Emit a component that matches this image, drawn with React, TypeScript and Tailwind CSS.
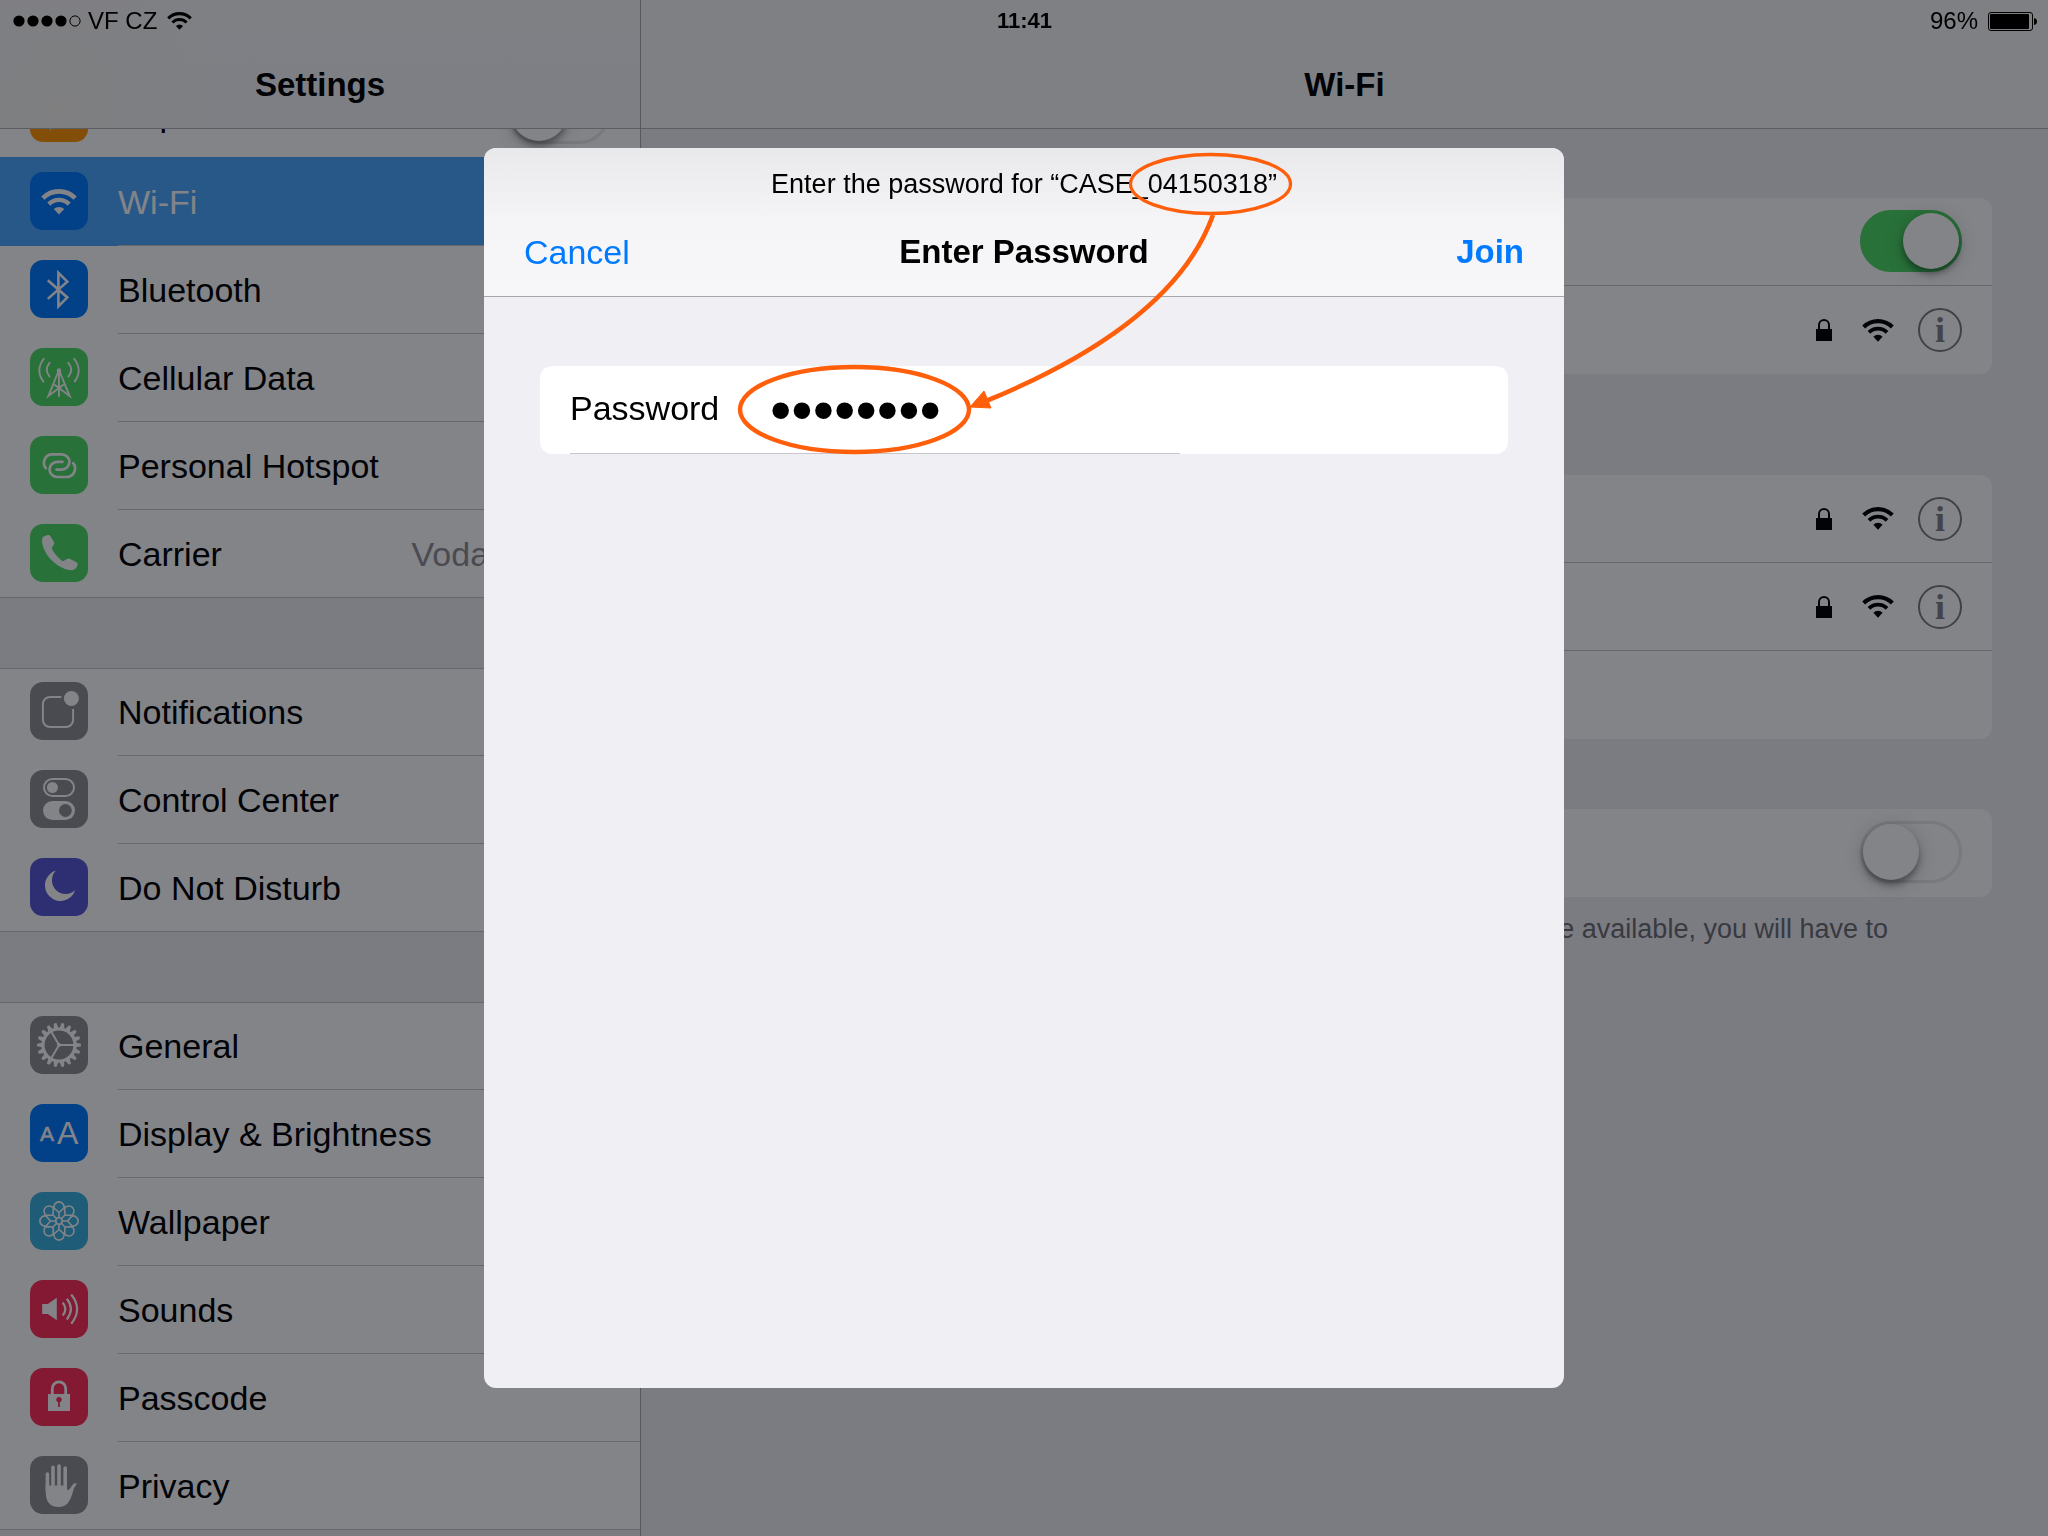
import type { ReactNode } from "react";
import clsx from "clsx";

const gearTeeth = Array.from({ length: 18 }, (_, i) => i * 20);
const petals = Array.from({ length: 8 }, (_, i) => i * 45);

function WifiGlyph({ className }: { className?: string }) {
  return (
    <svg viewBox="0 0 36 26" className={className} fill="none" aria-hidden="true">
      <path d="M1.8 9.1A22.9 22.9 0 0 1 34.2 9.1" stroke="currentColor" strokeWidth="4.6" />
      <path d="M7.8 15.1A14.4 14.4 0 0 1 28.2 15.1" stroke="currentColor" strokeWidth="4.4" />
      <path d="M18 25.6L12.8 20.1A7.3 7.3 0 0 1 23.2 20.1Z" fill="currentColor" />
    </svg>
  );
}

function LockGlyph({ className }: { className?: string }) {
  return (
    <svg viewBox="0 0 16 22" className={className} fill="none" aria-hidden="true">
      <path d="M3 11V6A5 5 0 0 1 13 6V11" stroke="currentColor" strokeWidth="2" />
      <rect y="10" width="16" height="12" fill="currentColor" />
    </svg>
  );
}

const icons = {
  airplane: (
    <path
      d="M45 28L12 13L18 27L10 31L17 33L20.500 47L24 38L30 44Z"
      fill="#fff"
    />
  ),
  wifi: (
    <g transform="translate(11 17)">
      <path d="M1.8 9.1A22.9 22.9 0 0 1 34.2 9.1" stroke="#fff" strokeWidth="4.6" />
      <path d="M7.8 15.1A14.4 14.4 0 0 1 28.2 15.1" stroke="#fff" strokeWidth="4.4" />
      <path d="M18 25.6L12.8 20.1A7.3 7.3 0 0 1 23.2 20.1Z" fill="#fff" />
    </g>
  ),
  bluetooth: (
    <path
      d="M17.8 20.3L37.3 37.4L28.4 46.4V12.8L37.3 21.7L17.8 38.9"
      stroke="#fff"
      strokeWidth="2.6"
      strokeMiterlimit="10"
    />
  ),
  cellular: (
    <g stroke="#fff" strokeWidth="1.9">
      <path d="M29 22V48.8M28.6 23L18.4 48L33.7 36.5M29.4 23L39.6 48L24.3 36.5" />
      <circle cx="29" cy="22.6" r="1.3" fill="#fff" />
      <g strokeLinecap="round">
        <path d="M19.6 14.8Q14 21.5 19.6 28.6" />
        <path d="M13.8 10.8Q5 22.5 13.4 33.6" />
        <path d="M38.4 14.8Q44 21.5 38.4 28.6" />
        <path d="M44.2 10.8Q53 22.5 44.6 33.6" />
      </g>
    </g>
  ),
  hotspot: (
    <g stroke="#fff" strokeWidth="2.7" strokeLinecap="round">
      <path d="M15.8 32.2A8.6 8.6 0 0 1 21 18.4H31.8A7.6 7.6 0 0 1 31.8 33.6H26.5" />
      <path
        d="M15.8 32.2A8.6 8.6 0 0 1 21 18.4H31.8A7.6 7.6 0 0 1 31.8 33.6H26.5"
        transform="rotate(180 29.5 29.7)"
      />
    </g>
  ),
  phone: (
    <path
      d="M13.5 12.5Q12 13.5 12 16C12 30 28 46 42 46.2Q45.5 46 47.5 41.5Q48.3 39.3 46.5 38.2L40.5 35.2Q38.3 34 36.5 35.3L33.5 37Q32.3 37.2 31.5 36.5C28 33.5 24.5 29.5 22.2 25.5Q21.5 24 22.3 23L24 20.3Q24.5 19.3 24 18.3L20.5 12.3Q19.3 10.5 17 11.2Z"
      fill="#fff"
    />
  ),
  notifications: (
    <>
      <path
        d="M31.3 14.9H20A7.1 7.1 0 0 0 12.9 22V38A7.1 7.1 0 0 0 20 45.1H36A7.1 7.1 0 0 0 43.1 38V27"
        stroke="#fff"
        strokeWidth="2"
      />
      <circle cx="41.4" cy="16.5" r="7.5" fill="#fff" />
    </>
  ),
  controlCenter: (
    <>
      <rect x="14" y="9" width="30" height="17" rx="8.5" stroke="#fff" strokeWidth="2" />
      <circle cx="22.4" cy="17.5" r="5.5" fill="#fff" />
      <rect x="13" y="31" width="32" height="19" rx="9.5" fill="#fff" />
      <circle cx="35.4" cy="40.5" r="6.4" fill="#8e8e93" />
    </>
  ),
  moon: <path d="M26 12.6A15.5 15.5 0 1 0 45.2 32A13.5 13.5 0 0 1 26 12.6Z" fill="#fff" />,
  gear: (
    <g transform="translate(29 29)">
      <circle r="16" stroke="#fff" strokeWidth="3.2" />
      {gearTeeth.map((angle) => (
        <path key={angle} d="M16 -2.6L22 -1.3V1.3L16 2.6Z" fill="#fff" transform={`rotate(${angle})`} />
      ))}
      {[0, 120, 240].map((angle) => (
        <path key={angle} d="M0 0H16" stroke="#fff" strokeWidth="2" transform={`rotate(${angle})`} />
      ))}
      <circle r="2" fill="#fff" />
    </g>
  ),
  display: (
    <g fill="#fff" fontFamily="Liberation Sans, Arial, sans-serif">
      <text x="10" y="37" fontSize="21" stroke="#fff" strokeWidth="0.5">
        A
      </text>
      <text x="27" y="40" fontSize="32">
        A
      </text>
    </g>
  ),
  wallpaper: (
    <g transform="translate(29 29)" stroke="#fff" strokeWidth="1.6">
      <circle r="3.2" />
      {petals.map((angle) => (
        <path
          key={angle}
          d="M0 -3.2V-8.5L-5 -13A5.1 5.1 0 1 1 5 -13L0 -8.5"
          transform={`rotate(${angle})`}
        />
      ))}
    </g>
  ),
  sounds: (
    <>
      <path d="M12.2 24H17.8L26.8 17.8V40.2L17.8 34H12.2Z" fill="#fff" />
      <path
        d="M32.7 22.5Q38 29 32.7 35.5M36.8 18.8Q45 29 36.8 39.5M41.2 14.5Q53 29 41.2 43.8"
        stroke="#fff"
        strokeWidth="2.2"
      />
    </>
  ),
  passcode: (
    <>
      <path d="M22.3 27V20.5A6.7 6.7 0 0 1 35.7 20.5V27" stroke="#fff" strokeWidth="2.8" />
      <rect x="18" y="26" width="22" height="17" fill="#fff" />
      <circle cx="29" cy="31.6" r="2.7" fill="#ff2d55" />
      <path d="M29 32V39" stroke="#ff2d55" strokeWidth="1.8" />
    </>
  ),
  hand: (
    <>
      <path
        d="M17.4 18V34M23 11.2V34M29 10V34M35.2 12V34"
        stroke="#fff"
        strokeWidth="3.6"
        strokeLinecap="round"
      />
      <path
        d="M15.7 29.5H36.9V34Q40 34 42 29.6Q44 26.6 47 27.6Q44 31 42.5 37C40 46 36 51 29 51C19 51 15.7 45 15.7 35Z"
        fill="#fff"
      />
    </>
  ),
};

type Item = {
  icon: ReactNode;
  color: string;
  name: string;
  value?: string;
  toggle?: boolean;
  selected?: boolean;
};

const groups: Item[][] = [
  [
    { icon: icons.airplane, color: "bg-[#ff9500]", name: "Airplane Mode", toggle: true },
    { icon: icons.wifi, color: "bg-[#007aff]", name: "Wi-Fi", selected: true },
    { icon: icons.bluetooth, color: "bg-[#007aff]", name: "Bluetooth" },
    { icon: icons.cellular, color: "bg-[#4cd964]", name: "Cellular Data" },
    { icon: icons.hotspot, color: "bg-[#4cd964]", name: "Personal Hotspot" },
    { icon: icons.phone, color: "bg-[#4cd964]", name: "Carrier", value: "Vodafone CZ" },
  ],
  [
    { icon: icons.notifications, color: "bg-[#8e8e93]", name: "Notifications" },
    { icon: icons.controlCenter, color: "bg-[#8e8e93]", name: "Control Center" },
    { icon: icons.moon, color: "bg-[#5856d6]", name: "Do Not Disturb" },
  ],
  [
    { icon: icons.gear, color: "bg-[#8e8e93]", name: "General" },
    { icon: icons.display, color: "bg-[#007aff]", name: "Display & Brightness" },
    { icon: icons.wallpaper, color: "bg-[#38b0de]", name: "Wallpaper" },
    { icon: icons.sounds, color: "bg-[#ff2d55]", name: "Sounds" },
    { icon: icons.passcode, color: "bg-[#ff2d55]", name: "Passcode" },
    { icon: icons.hand, color: "bg-[#8e8e93]", name: "Privacy" },
  ],
];

function Toggle({ label, on }: { label: string; on?: boolean }) {
  return (
    <input
      type="checkbox"
      role="switch"
      aria-label={label}
      defaultChecked={on}
      className="mb-0.5 flex h-[62px] w-[102px] shrink-0 appearance-none rounded-full border-[3px] border-[#e9e9ea] bg-white before:size-14 before:rounded-full before:bg-white before:shadow-[0_5px_6px_rgba(0,0,0,0.35),0_3px_20px_rgba(0,0,0,0.2)] checked:justify-end checked:border-[#4cd964] checked:bg-[#4cd964]"
    />
  );
}

function SidebarRow({ item, last }: { item: Item; last: boolean }) {
  const rowClass = clsx(
    "flex h-[88px] items-stretch",
    item.selected && "bg-[#4ba8ff] text-white shadow-[0_-1px_0_#4ba8ff]",
    last && "border-b border-[#c8c7cc]"
  );
  const content = (
    <>
      <span className="w-[118px] shrink-0 pt-[14px] pl-[30px]">
        <svg viewBox="0 0 58 58" className={clsx("size-[58px] rounded-[13px]", item.color)} fill="none" aria-hidden="true">
          {item.icon}
        </svg>
      </span>
      <span
        className={clsx(
          "flex flex-1 items-center justify-between pr-[30px]",
          !last && !item.toggle && "border-b border-[#c8c7cc]"
        )}
      >
        <span>{item.name}</span>
        {item.value && <span className="text-[#8e8e93]">{item.value}</span>}
        {item.toggle && <Toggle label={item.name} />}
      </span>
    </>
  );

  return (
    <li>
      {item.toggle ? (
        <div className={rowClass}>{content}</div>
      ) : (
        <a href="#" className={rowClass}>
          {content}
        </a>
      )}
    </li>
  );
}

function Sidebar() {
  return (
    <aside className="flex w-[641px] shrink-0 flex-col border-r border-[#a9a9ae] bg-[#efeff4]">
      <header className="z-10 flex h-[129px] items-end justify-center border-b border-[#b2b2b6] bg-[#f7f7f8] bg-[radial-gradient(circle_at_60px_110px,#f7f5f0,transparent_180px),linear-gradient(#f7f7f8,#f3f6f8)]">
        <h1 className="text-[33px] leading-[86px] font-bold">Settings</h1>
      </header>
      <nav className="flex-1 overflow-hidden">
        {/* first row is scrolled under the header */}
        <div className="-mt-[59px] flex flex-col gap-[70px]">
          {groups.map((group, index) => (
            <ul key={index} className="bg-white shadow-[inset_0_1px_0_#c8c7cc]">
              {group.map((item, i) => (
                <SidebarRow key={item.name} item={item} last={i === group.length - 1} />
              ))}
            </ul>
          ))}
        </div>
      </nav>
    </aside>
  );
}

function NetworkRow({ border }: { border?: boolean }) {
  return (
    <div className={clsx("flex h-[88px] items-center justify-end pr-[30px]", border && "border-b border-[#c8c7cc]")}>
      <LockGlyph className="mr-[30px] h-[22px] w-4" />
      <WifiGlyph className="mr-6 h-[23px] w-8" />
      <button
        type="button"
        aria-label="More info"
        className="flex size-11 items-center justify-center rounded-full border-2 border-[#7c7c80] font-['Liberation_Serif',serif] text-[36px] leading-none font-bold text-[#808084]"
      >
        i
      </button>
    </div>
  );
}

function WifiPanel() {
  return (
    <main className="flex-1 bg-[#efeff4]">
      <header className="flex h-[129px] items-end justify-center border-b border-[#b2b2b6] bg-[#f7f7f8]">
        <h2 className="text-[33px] leading-[86px] font-bold">Wi-Fi</h2>
      </header>
      <div className="px-14 pt-[69px]">
        <section className="rounded-xl bg-white">
          <div className="flex h-[88px] items-center justify-end border-b border-[#c8c7cc] pr-[30px]">
            <Toggle label="Wi-Fi" on />
          </div>
          <NetworkRow />
        </section>
        <section className="mt-[101px] rounded-xl bg-white">
          <NetworkRow border />
          <NetworkRow border />
          <div className="h-[88px]" />
        </section>
        <section className="mt-[70px] rounded-xl bg-white">
          <div className="flex h-[88px] items-center justify-end pr-[30px]">
            <Toggle label="Ask to Join Networks" />
          </div>
        </section>
        <p className="mt-4 flex justify-end pr-[104px] text-[27px] leading-8 whitespace-nowrap text-[#6d6d72]">
          Known networks will be joined automatically. If no known networks are available, you will have to
        </p>
      </div>
    </main>
  );
}

function StatusBar() {
  return (
    <div className="fixed inset-x-0 top-0 z-30 grid h-[42px] grid-cols-3 items-center pr-[11px] pl-3 text-2xl text-black">
      <div className="flex items-center">
        <svg viewBox="0 0 70 12" className="h-3 w-[70px]" fill="none" aria-hidden="true">
          {[7, 21, 35, 49].map((cx) => (
            <circle key={cx} cx={cx} cy="6" r="5.6" fill="currentColor" />
          ))}
          <circle cx="63" cy="6" r="5.1" stroke="currentColor" />
        </svg>
        <span className="ml-1.5">VF CZ</span>
        <WifiGlyph className="ml-2.5 h-[18px] w-[25px]" />
      </div>
      <div className="text-center text-[22px] font-bold">11:41</div>
      <div className="flex items-center justify-end gap-2.5">
        <span>96%</span>
        <svg viewBox="0 0 49 19" className="h-[19px] w-[49px]" fill="none" aria-hidden="true">
          <rect x="0.5" y="0.5" width="44" height="18" rx="2.5" stroke="currentColor" />
          <rect x="2" y="2" width="39" height="15" rx="1" fill="currentColor" />
          <path d="M46 6Q49 6.5 49 9.5Q49 12.500 46 13Z" fill="currentColor" />
        </svg>
      </div>
    </div>
  );
}

function PasswordDialog() {
  return (
    <div
      role="dialog"
      aria-labelledby="dialog-title"
      className="relative flex h-[1240px] w-[1080px] flex-col overflow-hidden rounded-xl bg-[#efeff4] text-black"
    >
      <header className="border-b border-[#a7a7ab] bg-linear-to-b from-[#e9e9eb] via-[#f5f5f7] to-[#f7f7f9]">
        <p className="flex h-[60px] items-center justify-center pt-3 text-[27px]">
          Enter the password for “CASE_04150318”
        </p>
        <div className="grid h-[88px] grid-cols-3 items-center px-10">
          <button type="button" className="justify-self-start text-[#007aff]">
            Cancel
          </button>
          <h2 id="dialog-title" className="text-center text-[33px] font-bold">
            Enter Password
          </h2>
          <button type="button" className="justify-self-end text-[33px] font-bold text-[#007aff]">
            Join
          </button>
        </div>
      </header>
      <form className="mx-14 mt-[69px] h-[88px] rounded-xl bg-white pl-[30px]">
        <div className="flex h-full w-[610px] items-center border-b border-[#c8c7cc]">
          <label htmlFor="password" className="w-[200px] pb-1">
            Password
          </label>
          <input
            id="password"
            type="password"
            defaultValue="04150318"
            className="min-w-0 flex-1 bg-transparent text-[61px] leading-none outline-none"
          />
        </div>
      </form>
      <svg
        viewBox="0 0 1080 340"
        className="pointer-events-none absolute top-0 left-0 h-[340px] w-[1080px]"
        fill="none"
        stroke="#ff5f0a"
        aria-hidden="true"
      >
        <ellipse cx="726.5" cy="36" rx="80" ry="29.5" strokeWidth="3.3" />
        <ellipse cx="370.5" cy="261.500" rx="114.5" ry="42.5" strokeWidth="4.4" />
        <path d="M729 67Q690 176 502 253" strokeWidth="4.6" />
        <path d="M486 259L500 243L507 260Z" fill="#ff5f0a" stroke="#ff5f0a" strokeWidth="1" />
      </svg>
    </div>
  );
}

export default function App() {
  return (
    <div className="min-h-screen font-['Liberation_Sans',Arial,sans-serif] text-[34px] leading-10 text-black">
      <div className="flex min-h-screen">
        <Sidebar />
        <WifiPanel />
      </div>
      <div className="fixed inset-0 z-20 flex items-center justify-center bg-[rgba(4,6,14,0.494)]">
        <PasswordDialog />
      </div>
      <StatusBar />
    </div>
  );
}
